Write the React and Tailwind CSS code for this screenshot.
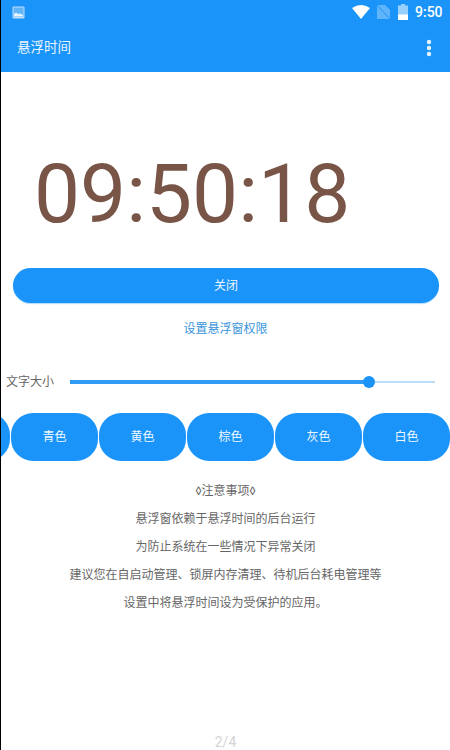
import React from "react";

const colors = ["", "青色", "黄色", "棕色", "灰色", "白色"];
const notes = [
  "◊注意事项◊",
  "悬浮窗依赖于悬浮时间的后台运行",
  "为防止系统在一些情况下异常关闭",
  "建议您在自启动管理、锁屏内存清理、待机后台耗电管理等",
  "设置中将悬浮时间设为受保护的应用。",
];
const font = "font-['Roboto','Noto_Sans_CJK_SC',sans-serif]";

export default function App() {
  return (
    <div className={`${font} w-[450px] h-[750px] overflow-hidden flex flex-col bg-white border-l border-black`}>
      <div className="h-[72px] shrink-0 bg-[#1a94f9] flex flex-col text-white">
        <div className="h-6 flex items-center pl-[11px] pr-[5px]">
          <svg width="13" height="13" viewBox="0 0 13 13" className="opacity-90">
            <rect x="0.5" y="0.5" width="12" height="12" rx="1" fill="#cfe6fd" />
            <rect x="1.5" y="1.5" width="10" height="9.5" fill="#1a94f9" opacity="0.55" />
            <path d="M2 10.5 L2 8 L4 6.5 L6 8 L8 7.5 L11 9 L11 10.5 Z" fill="#fff" />
          </svg>
          <div className="ml-auto flex items-center">
            <svg width="18" height="14" viewBox="0 0 18 14"><path d="M0 3 Q9 -3 18 3 L9 14 Z" fill="#fff" /></svg>
            <svg width="13" height="14" viewBox="0 0 13 14" className="ml-[7px]">
              <path d="M0 0 H8 L13 5 V14 H0 Z" fill="#fff" opacity="0.3" />
              <path d="M0 0 L13 14" stroke="#1a94f9" strokeWidth="1" />
            </svg>
            <svg width="10" height="16" viewBox="0 0 10 16" className="ml-[8px]">
              <path d="M3 0 H7 V1.5 H10 V16 H0 V1.5 H3 Z" fill="#fff" opacity="0.55" />
              <rect x="0" y="10.5" width="10" height="5.5" fill="#fff" />
            </svg>
            <span className="ml-[7px] text-[14px] leading-none font-medium w-[30px]">9:50</span>
          </div>
        </div>
        <div className="flex-1 flex items-center pl-[16px] pr-[17px]">
          <span className="text-[13.5px] mt-[-2px] text-[#e9f4fe]">悬浮时间</span>
          <svg width="6" height="18" viewBox="0 0 6 18" className="ml-auto mr-px">
            <circle cx="3" cy="3" r="2.2" fill="#e6f3ff" />
            <circle cx="3" cy="9" r="2.2" fill="#e6f3ff" />
            <circle cx="3" cy="15" r="2.2" fill="#e6f3ff" />
          </svg>
        </div>
      </div>

      <div className="flex-1 flex flex-col">
        <div className="mt-[73px] pl-[33px] text-[82px] leading-[98px] text-[#795548]">09:50:18</div>

        <div className="mt-[25px] ml-3 mr-[11px] h-[35px] rounded-[18px] bg-[#1a94f9] flex items-center justify-center text-[12px] text-[#eef7ff] shadow-[0_1px_1px_rgba(26,148,249,0.35)]">
          关闭
        </div>

        <div className="mt-[18px] text-center text-[12px] leading-[16px] text-[#3a94db]">设置悬浮窗权限</div>

        <div className="mt-[35px] h-[20px] flex items-center">
          <span className="ml-[5px] w-[64px] shrink-0 text-[12px] text-[#666]">文字大小</span>
          <div className="w-[365px] h-[4px] flex items-center">
            <div className="w-[299px] h-[4px] bg-[#2f9bf5]" />
            <div className="w-[12px] h-[12px] -ml-[6px] shrink-0 rounded-full bg-[#1a94f9]" />
            <div className="flex-1 h-[2px] bg-[#bcdcf7]" />
          </div>
        </div>

        <div className="mt-[21px] h-[48px] flex gap-px ml-[-78px] shrink-0">
          {colors.map((c, i) => (
            <div key={i} className="w-[87px] h-[48px] shrink-0 rounded-[22px] bg-[#1a94f9] flex items-center justify-center text-[12px] text-[#eef7ff]">
              {c}
            </div>
          ))}
        </div>

        <div className="mt-[16px] flex flex-col items-center text-[12px] leading-[28px] text-[#666]">
          {notes.map((n) => (
            <div key={n}>{n}</div>
          ))}
        </div>

        <div className="mt-auto h-[16px] text-center text-[14px] leading-[16px] text-[#d4d4d4]">2/4</div>
      </div>
    </div>
  );
}
